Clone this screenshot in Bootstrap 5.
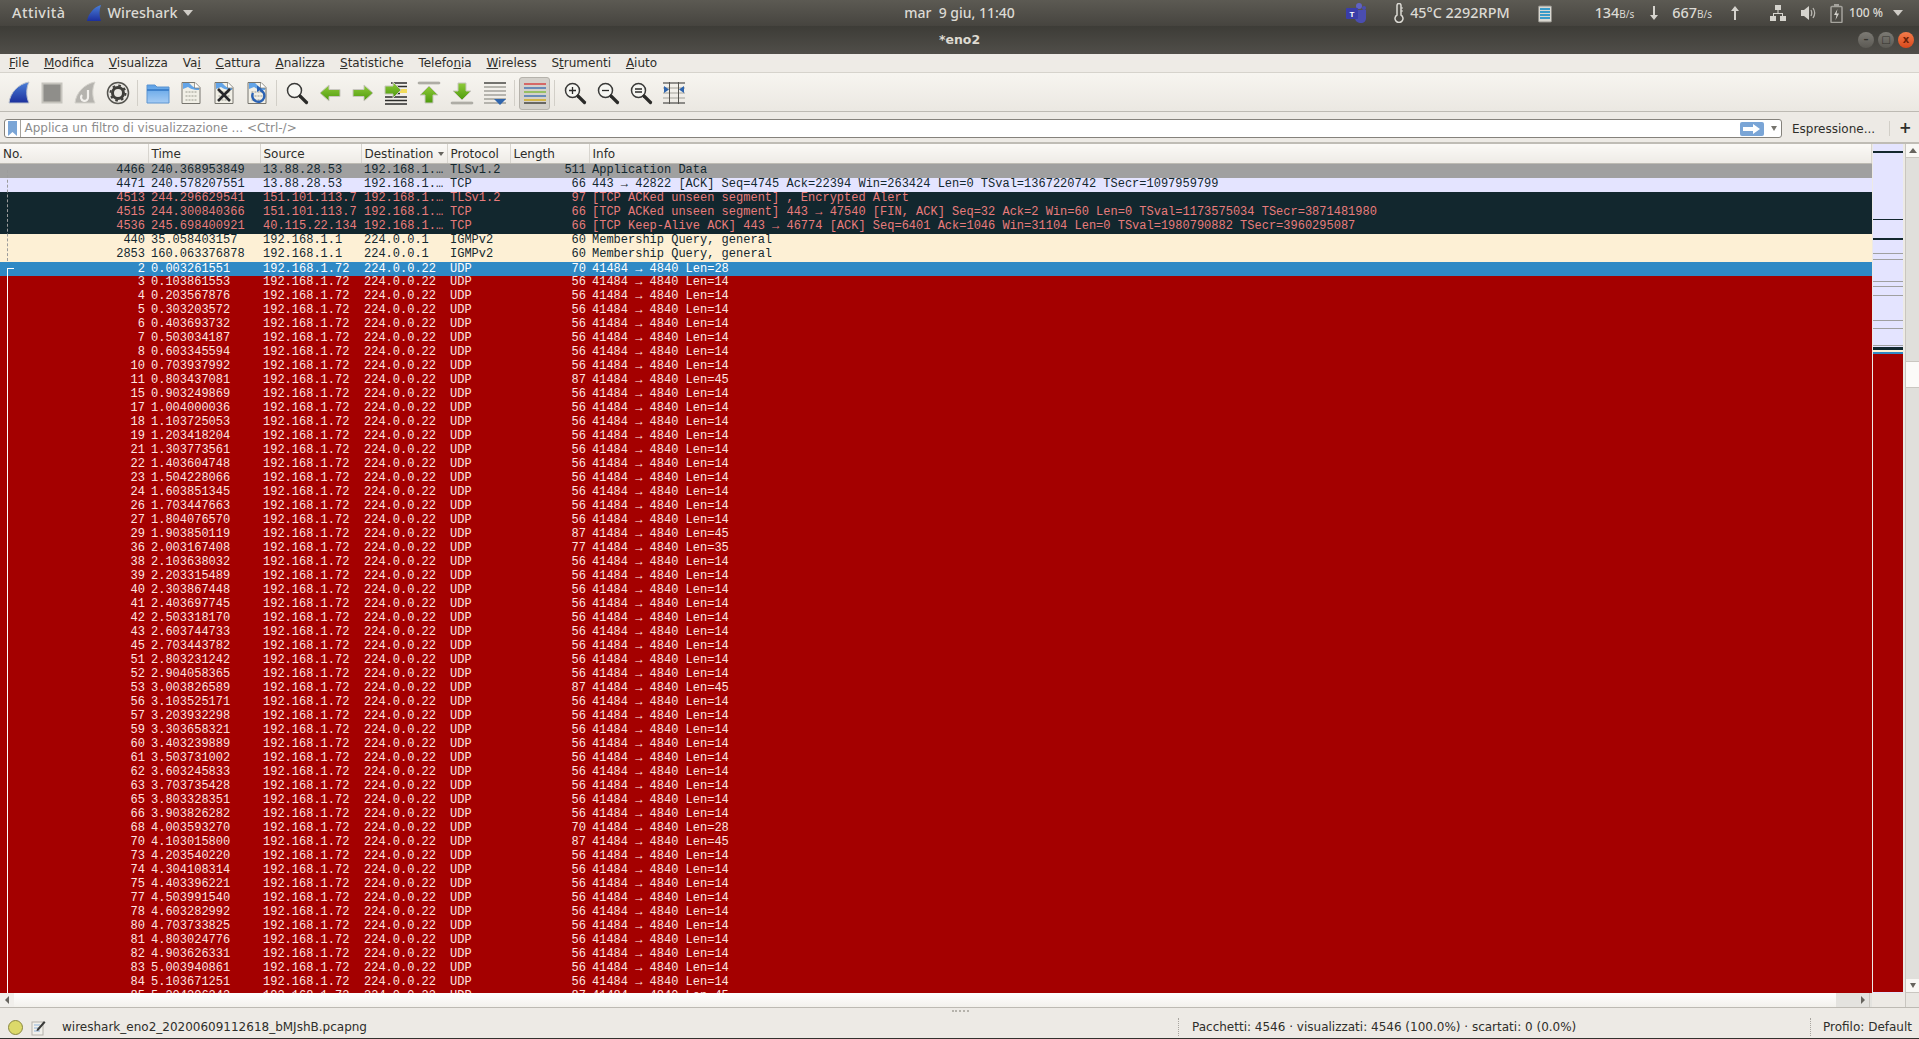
<!DOCTYPE html>
<html lang="it">
<head>
    <meta charset="UTF-8">
    <title>*eno2</title>
    <link href="https://cdn.jsdelivr.net/npm/bootstrap@5.3.0/dist/css/bootstrap.min.css" rel="stylesheet">
    <style>
        html, body { height: 100%; overflow: hidden; }
        body { font-family: "DejaVu Sans", sans-serif; font-size: 12px; color: #2e2e2a; background: #edeae5; }
        svg { display: block; flex: none; }

        /* gnome top bar */
        .top-bar { height: 26px; background: linear-gradient(#5c5a53, #46443f); color: #dcdad4; font-family: "Noto Sans", sans-serif; font-size: 14.4px; font-weight: 500; line-height: 26px; }
        .top-side { flex: 1 1 0; }
        .top-date { font-size: 14px; }
        .top-act { letter-spacing: .5px; }
        .ms-shark { margin-left: 20px; }
        .ms-6 { margin-left: 6px; }
        .ms-8 { margin-left: 8px; }
        .ms-27 { margin-left: 27px; }
        .ms-31 { margin-left: 31px; }
        .ms-42 { margin-left: 42px; }
        .ms-19 { margin-left: 19px; }
        .ms-16 { margin-left: 16px; }
        .ms-14 { margin-left: 14px; }
        .ms-15 { margin-left: 15px; }
        .ms-10 { margin-left: 10px; }
        .me-16 { margin-right: 16px; }
        .unit-small { font-size: 10px; font-weight: 400; }
        .tiny-pct { font-size: 12px; }
        .drop-tri { width: 0; height: 0; border-left: 5px solid transparent; border-right: 5px solid transparent; border-top: 6px solid #cfccc6; }

        /* window title */
        .title-bar { height: 28px; background: linear-gradient(#3d3c37, #504e49); color: #dfdbd2; font-size: 12.5px; font-weight: 700; position: relative; }
        .win-btns { position: absolute; right: 5px; top: 6px; gap: 4px; }
        .win-btn { width: 16px; height: 16px; border-radius: 50%; background: linear-gradient(#7d7b75, #5b5953); color: #35342f; font-size: 10px; line-height: 16px; text-align: center; }
        .win-close { background: linear-gradient(#f47c4b, #d9491c); color: #6d2208; }

        /* menu */
        .menu-bar { height: 19px; background: #eeebe6; border-bottom: 1px solid #d6d3cc; padding-left: 2px; line-height: 18px; }
        .menu-item { padding: 0 7px; margin-right: .8px; color: #2e2e2a; }

        /* toolbar */
        .tool-bar { height: 39px; background: linear-gradient(#f7f5f0, #ebe8e2); border-bottom: 1px solid #bdbab3; padding: 2px 0 0 2px; }
        .tool-btn { width: 33px; height: 33px; }
        .tool-on { width: 31px; margin: 0 1px; background: #d4d1cb; border: 1px solid #b5b2ab; border-radius: 3px; }
        .tool-sep { width: 7px; height: 26px; }
        .tool-sep::after { content: ""; display: block; width: 1px; height: 100%; margin-left: 3px; background: #d2cfc8; }

        /* display filter */
        .filter-bar { height: 32px; background: #edeae5; border-bottom: 2px solid #bfbcb5; padding: 3px 0 0 4px; }
        .filter-box { width: 1778px; height: 19px; background: #fff; border: 1px solid #85827c; border-radius: 3px; }
        .filter-mark { width: 17px; height: 100%; border-right: 1px solid #a5a29c; }
        .filter-input { height: 17px; padding: 0 3px; border: 0; border-radius: 0; font-size: 12px; line-height: 17px; background: transparent; }
        .filter-input::placeholder { color: #8c8c8c; opacity: 1; }
        .filter-go { margin-right: 7px; }
        .filter-tri { margin-right: 4px; width: 0; height: 0; border-left: 3.5px solid transparent; border-right: 3.5px solid transparent; border-top: 5px solid #77756f; }
        .expr-btn { margin-left: 10px; width: 97px; }
        .expr-sep { width: 1px; height: 15px; background: #d2cfc8; }
        .expr-plus { margin-left: 9px; font-size: 15px; line-height: 15px; font-weight: 700; }

        /* packet list */
        .list-pane { flex: 1 1 0; min-height: 0; position: relative; }
        .list-main { flex: 1 1 0; min-width: 0; overflow: hidden; }
        .list-scroll { flex: 1 1 0; min-height: 0; overflow: hidden; background: #a40000; }
        .pkt-table { table-layout: fixed; width: 100%; font-family: "Liberation Mono", monospace; font-size: 12px; }
        .pkt-table > thead > tr > th { height: 19px; padding: 1px 3px 0; font-family: "DejaVu Sans", sans-serif; font-size: 12px; font-weight: 400; line-height: 17px; color: #2e2e2a; background: linear-gradient(#fbf9f6, #eeebe6); border-right: 1px solid #d8d5cf; border-bottom: 1px solid #bdbab3; }
        .pkt-table > tbody > tr > td { height: 14px; padding: 0 3px 1px; line-height: 13px; white-space: nowrap; overflow: hidden; border: 0; color: var(--row-fg); background-color: var(--row-bg); }
        .pkt-table > tbody > tr.pkt-sel > td { padding: 0 3px; line-height: 14px; }
        .pkt-gray { --row-bg: #a0a0a0; --row-fg: #12272e; }
        .pkt-lav { --row-bg: #e4e4ff; --row-fg: #12272e; }
        .pkt-dark { --row-bg: #12272e; --row-fg: #e87c7c; }
        .pkt-cream { --row-bg: #fdf0d5; --row-fg: #12272e; }
        .pkt-sel { --row-bg: #2f89c5; --row-fg: #fff; }
        .pkt-red { --row-bg: #a40000; --row-fg: #ffe4e0; }
        .sort-tri { width: 0; height: 0; margin-top: 6px; border-left: 3.5px solid transparent; border-right: 3.5px solid transparent; border-top: 4px solid #66645e; }

        .rel-up { position: absolute; left: 7px; top: 26px; height: 91px; border-left: 1px dashed #9c9c9c; }
        .rel-down { position: absolute; left: 7px; top: 124px; width: 7px; bottom: 14px; border-left: 1px solid #fff; border-top: 1px solid #fff; }

        /* intelligent scrollbar and scrollbars */
        .mini-map { width: 30px; margin-left: 1px; margin-bottom: 14px; background: #e4e4ff; }
        .v-scroll { width: 14px; margin-left: 2px; background: #e0dfdb; border-left: 1px solid #c9c6c0; }
        .scroll-btn { height: 14px; background: #f8f7f4; border-bottom: 1px solid #c9c6c0; }
        .scroll-thumb { height: 27px; margin-top: 203px; background: #fbfaf8; border-top: 1px solid #c9c6c0; border-bottom: 1px solid #c9c6c0; }
        .scroll-corner { height: 14px; background: #e9e7e2; }
        .tri-up { width: 0; height: 0; border-left: 4px solid transparent; border-right: 4px solid transparent; border-bottom: 5px solid #66645e; }
        .tri-down { width: 0; height: 0; border-left: 3.5px solid transparent; border-right: 3.5px solid transparent; border-top: 5px solid #66645e; }
        .tri-left { width: 0; height: 0; border-top: 4px solid transparent; border-bottom: 4px solid transparent; border-right: 4px solid #66645e; }
        .tri-right { width: 0; height: 0; border-top: 4px solid transparent; border-bottom: 4px solid transparent; border-left: 4px solid #66645e; }
        .h-scroll { height: 14px; background: #e4e3df; flex: none; }
        .h-end { width: 14px; background: #f1efeb; }
        .h-thumb { flex: 1 1 0; background: linear-gradient(#fff, #f3f1ec); }
        .h-trough { width: 21px; }
        .h-end-right { width: 13px; background: #e4e3df; border-right: 1px solid #c9c6c0; }
        .h-rest { width: 2px; }

        /* status bar */
        .status-bar { height: 32px; background: #edeae5; border-top: 1px solid #bdbab3; border-bottom: 1px solid #33322e; padding: 8px 7px 0 8px; position: relative; }
        .led { width: 15px; height: 15px; border-radius: 50%; background: #dcd96a; border: 1px solid #8a8840; }
        .status-file { margin-left: 16px; }
        .status-count { width: 632px; padding-left: 13px; border-left: 1px dotted #a8a59f; }
        .status-prof { padding-left: 12px; border-left: 1px dotted #a8a59f; }
        .grip { position: absolute; left: 952px; top: 2px; width: 17px; height: 2px; border-top: 2px dotted #b5b2ab; }
    </style>
</head>
<body class="d-flex flex-column">

    <!-- shared icon parts -->
    <svg width="0" height="0" class="position-absolute">
        <defs>
            <linearGradient id="grn" x1="0" y1="0" x2="0" y2="1"><stop offset="0" stop-color="#8fcb3a"/><stop offset="1" stop-color="#4d9a0c"/></linearGradient>
            <linearGradient id="fin" x1="0" y1="0" x2="0" y2="1"><stop offset="0" stop-color="#4a7fd8"/><stop offset="1" stop-color="#1c2f9c"/></linearGradient>
            <linearGradient id="fold" x1="0" y1="0" x2="0" y2="1"><stop offset="0" stop-color="#5aa0e6"/><stop offset="1" stop-color="#a6ccf4"/></linearGradient>
            <symbol id="page" viewBox="0 0 24 24">
                <path d="M3 1.500h13l5 5v16H3z" fill="#f1efe6" stroke="#77756e"/>
                <path d="M4 2h6c3 2 3 5 10 5v2c-7 0-9-2-11-3l-5 2z" fill="#62a4e8"/>
                <path d="M15.500 1.500v5.500h5.500" fill="#fff" stroke="#77756e" stroke-width=".7"/>
                <g stroke="#9a9a8e" stroke-width="1.200" stroke-dasharray="2 1"><path d="M6.500 11h11M6.500 15h11M6.500 19h11"/></g>
            </symbol>
            <symbol id="lens" viewBox="0 0 24 24">
                <circle cx="9.500" cy="9.500" r="7" fill="#f6f6f2" stroke="#3a3a38" stroke-width="1.500"/>
                <path d="M15 15l6.500 6.500" stroke="#2b2b29" stroke-width="3.200" stroke-linecap="round"/>
            </symbol>
        </defs>
    </svg>

    <!-- top bar -->
    <div class="top-bar d-flex align-items-center flex-none">
        <div class="top-side d-flex align-items-center">
            <span class="ms-2 ps-1 top-act">Attività</span>
            <svg class="ms-shark" width="16" height="17" viewBox="0 0 16 17"><path d="M1 16C2 9 8 2 15 0c-2 5-2 11 0 16z" fill="url(#fin)"/></svg>
            <span class="ms-6">Wireshark</span>
            <span class="drop-tri ms-6"></span>
        </div>
        <div class="top-date">mar&nbsp;&nbsp;9 giu, 11:40</div>
        <div class="top-side d-flex align-items-center justify-content-end">
            <svg width="22" height="22" viewBox="0 0 22 22"><circle cx="14" cy="4" r="3" fill="#5f62c4"/><circle cx="19" cy="6" r="2" fill="#4a4db0"/><path d="M10 8h11v8c0 3-2 5-5 5s-6-2-6-5z" fill="#4a4db0"/><rect x="1" y="6" width="12" height="11" rx="1" fill="#3a3da8"/><text x="7" y="15" text-anchor="middle" font-size="8" font-family="Liberation Sans" font-weight="700" fill="#fff">T</text></svg>
            <svg class="ms-27" width="10" height="20" viewBox="0 0 10 20"><path d="M3 2.500a2 2 0 0 1 4 0v9.500a4 4 0 1 1-4 0z" fill="none" stroke="#dcdad4" stroke-width="1.500"/><path d="M7 5h2M7 8h2" stroke="#dcdad4"/></svg>
            <span class="ms-6">45°C 2292RPM</span>
            <svg class="ms-27" width="16" height="19" viewBox="0 0 16 19"><rect x="1.500" y="2" width="13" height="16" rx="1" fill="#d9d7d0" stroke="#8f8d87"/><path d="M3 5h10M3 8h10M3 11h10M3 14h10" stroke="#3a9bc9" stroke-width="1.800"/></svg>
            <span class="ms-42">134<span class="unit-small">B/s</span></span>
            <svg class="ms-16" width="8" height="14" viewBox="0 0 8 14"><path d="M3 0h2v9h3l-4 5-4-5h3z" fill="#d5d3cd"/></svg>
            <span class="ms-14">667<span class="unit-small">B/s</span></span>
            <svg class="ms-19" width="8" height="14" viewBox="0 0 8 14"><path d="M3 14h2V5h3L4 0 0 5h3z" fill="#d5d3cd"/></svg>
            <svg class="ms-31" width="16" height="16" viewBox="0 0 16 16" fill="#d5d3cd"><rect x="5" y="0" width="6" height="5"/><rect x="0" y="11" width="6" height="5"/><rect x="10" y="11" width="6" height="5"/><path d="M7.500 5h1v3H13v3h-1V9H4v2H3V8h4.500z"/></svg>
            <svg class="ms-15" width="15" height="16" viewBox="0 0 15 16" fill="none" stroke="#b8b6b0"><path d="M0 5h3l5-4v14l-5-4H0z" fill="#d5d3cd" stroke="none"/><path d="M10 5c1 2 1 4 0 6M12 3c2 3 2 7 0 10" stroke-width="1.300"/></svg>
            <svg class="ms-14" width="13" height="19" viewBox="0 0 13 19"><rect x="1" y="2.500" width="11" height="16" rx="1" fill="none" stroke="#a5a39d" stroke-width="1.500"/><rect x="4" y="0" width="5" height="2" fill="#a5a39d"/><path d="M7.500 5L4 11h2.500L5.500 16 9 9.500H6.500z" fill="#d5d3cd"/></svg>
            <span class="ms-6 tiny-pct">100 %</span>
            <span class="drop-tri ms-10 me-16"></span>
        </div>
    </div>

    <!-- window title -->
    <div class="title-bar d-flex align-items-center justify-content-center flex-none">
        <span>*eno2</span>
        <div class="win-btns d-flex">
            <div class="win-btn">–</div>
            <div class="win-btn">□</div>
            <div class="win-btn win-close">x</div>
        </div>
    </div>

    <!-- menu -->
    <nav class="menu-bar d-flex flex-none">
        <span class="menu-item"><u>F</u>ile</span>
        <span class="menu-item"><u>M</u>odifica</span>
        <span class="menu-item"><u>V</u>isualizza</span>
        <span class="menu-item">Va<u>i</u></span>
        <span class="menu-item"><u>C</u>attura</span>
        <span class="menu-item"><u>A</u>nalizza</span>
        <span class="menu-item"><u>S</u>tatistiche</span>
        <span class="menu-item">Telefo<u>n</u>ia</span>
        <span class="menu-item"><u>W</u>ireless</span>
        <span class="menu-item">S<u>t</u>rumenti</span>
        <span class="menu-item"><u>A</u>iuto</span>
    </nav>

    <!-- toolbar -->
    <div class="tool-bar d-flex align-items-center flex-none">
        <div class="tool-btn d-flex align-items-center justify-content-center"><svg width="24" height="24" viewBox="0 0 24 24"><path d="M2 22C3 12 11 3 22 1c-3 6-3 15 0 21z" fill="url(#fin)" stroke="#b9c0cc"/></svg></div>
        <div class="tool-btn d-flex align-items-center justify-content-center"><svg width="24" height="24" viewBox="0 0 24 24"><rect x="2.500" y="2.500" width="19" height="19" fill="#8f8e8a" stroke="#c6c4bd" stroke-width="2"/></svg></div>
        <div class="tool-btn d-flex align-items-center justify-content-center"><svg width="24" height="24" viewBox="0 0 24 24"><path d="M2 22C3 12 11 3 22 1c-3 6-3 15 0 21z" fill="#b5b3ae" stroke="#d4d2cc"/><path d="M15 9v7a3.500 3.500 0 1 1-6-2" fill="none" stroke="#f2f0ec" stroke-width="2.200"/></svg></div>
        <div class="tool-btn d-flex align-items-center justify-content-center"><svg width="24" height="24" viewBox="0 0 24 24"><circle cx="12" cy="12" r="10.500" fill="#e9e7e2" stroke="#55544f" stroke-width="1.500"/><circle cx="12" cy="12" r="5.500" fill="none" stroke="#3f3e3a" stroke-width="3"/><circle cx="12" cy="12" r="7.500" fill="none" stroke="#3f3e3a" stroke-width="2" stroke-dasharray="2.600 3.300"/></svg></div>
        <div class="tool-sep"></div>
        <div class="tool-btn d-flex align-items-center justify-content-center"><svg width="24" height="22" viewBox="0 0 24 22"><path d="M1 3h8l2 2h12v16H1z" fill="url(#fold)" stroke="#5c94d0"/><rect x="1" y="7" width="22" height="2" fill="#3f82cc"/></svg></div>
        <div class="tool-btn d-flex align-items-center justify-content-center"><svg width="24" height="24"><use href="#page"/></svg></div>
        <div class="tool-btn d-flex align-items-center justify-content-center"><svg width="24" height="24" viewBox="0 0 24 24"><use href="#page" width="24" height="24"/><path d="M6 8l12 12M18 8L6 20" stroke="#26262a" stroke-width="2.600"/></svg></div>
        <div class="tool-btn d-flex align-items-center justify-content-center"><svg width="24" height="24" viewBox="0 0 24 24"><use href="#page" width="24" height="24"/><path d="M15 9a6 6 0 1 1-7 3" fill="none" stroke="#2a62b4" stroke-width="2.400"/><path d="M12 4.500l5 3.500-5 3z" fill="#2a62b4"/></svg></div>
        <div class="tool-sep"></div>
        <div class="tool-btn d-flex align-items-center justify-content-center"><svg width="24" height="24"><use href="#lens"/></svg></div>
        <div class="tool-btn d-flex align-items-center justify-content-center"><svg width="24" height="24" viewBox="0 0 24 24"><path d="M2 12l9-8v4.500h11v7H11V20z" fill="url(#grn)" stroke="#c8c6bf"/></svg></div>
        <div class="tool-btn d-flex align-items-center justify-content-center"><svg width="24" height="24" viewBox="0 0 24 24"><path d="M22 12l-9-8v4.500H2v7h11V20z" fill="url(#grn)" stroke="#c8c6bf"/></svg></div>
        <div class="tool-btn d-flex align-items-center justify-content-center"><svg width="24" height="24" viewBox="0 0 24 24"><path d="M7 2h16M12 5.500h11M12 9h4M12 12.500h4M1 16h22M1 19.500h22M1 23h22" stroke="#2d2d2b" stroke-width="1.300"/><rect x="16" y="8" width="7" height="4" fill="#f2dc5c"/><path d="M17 9l-8-8v4H1v8h8v4z" fill="url(#grn)" stroke="#c8c6bf"/></svg></div>
        <div class="tool-btn d-flex align-items-center justify-content-center"><svg width="24" height="24" viewBox="0 0 24 24"><rect x="1" y="1" width="22" height="2" rx="1" fill="#b9b7b0" stroke="#8f8d87" stroke-width=".5"/><path d="M12 5l9 9h-5v8H8v-8H3z" fill="url(#grn)" stroke="#c8c6bf"/></svg></div>
        <div class="tool-btn d-flex align-items-center justify-content-center"><svg width="24" height="24" viewBox="0 0 24 24"><rect x="1" y="21" width="22" height="2" rx="1" fill="#b9b7b0" stroke="#8f8d87" stroke-width=".5"/><path d="M12 19l-9-9h5V2h8v8h5z" fill="url(#grn)" stroke="#c8c6bf"/></svg></div>
        <div class="tool-btn d-flex align-items-center justify-content-center"><svg width="24" height="24" viewBox="0 0 24 24"><path d="M1 2h22" stroke="#2d2d2b" stroke-width="1.300"/><path d="M1 6h22M1 10h22M1 14h22M1 18h22M1 22h22" stroke="#a3a19a" stroke-width="1.300"/><path d="M11 18h12l-6 6z" fill="#2f65ad"/></svg></div>
        <div class="tool-sep"></div>
        <div class="tool-btn tool-on d-flex align-items-center justify-content-center"><svg width="24" height="22" viewBox="0 0 24 22" stroke-width="1.300"><path d="M1 2h22" stroke="#d62f2f"/><path d="M1 6h22" stroke="#2f65ad"/><path d="M1 10h22" stroke="#74b52c"/><path d="M1 14h22" stroke="#2f65ad"/><path d="M1 18h22" stroke="#d1a400"/><path d="M1 21h22" stroke="#2d2d2b"/></svg></div>
        <div class="tool-sep"></div>
        <div class="tool-btn d-flex align-items-center justify-content-center"><svg width="24" height="24" viewBox="0 0 24 24"><use href="#lens" width="24" height="24"/><path d="M6 9.500h7M9.500 6v7" stroke="#2b2b29" stroke-width="1.300"/></svg></div>
        <div class="tool-btn d-flex align-items-center justify-content-center"><svg width="24" height="24" viewBox="0 0 24 24"><use href="#lens" width="24" height="24"/><path d="M6 9.500h7" stroke="#2b2b29" stroke-width="1.300"/></svg></div>
        <div class="tool-btn d-flex align-items-center justify-content-center"><svg width="24" height="24" viewBox="0 0 24 24"><use href="#lens" width="24" height="24"/><path d="M6 8h7M6 11h7" stroke="#2b2b29" stroke-width="1.300"/></svg></div>
        <div class="tool-btn d-flex align-items-center justify-content-center"><svg width="24" height="24" viewBox="0 0 24 24"><path d="M1 2h22M1 22h22" stroke="#2d2d2b" stroke-width="1.200"/><path d="M1 7h22M1 12h22M1 17h22" stroke="#a3a19a" stroke-width="1.200"/><path d="M7.500 1v22M16.500 1v22" stroke="#55544f"/><path d="M2 5l5 3.500L2 12zM22 5l-5 3.500 5 3.500z" fill="#2f65ad"/></svg></div>
    </div>

    <!-- display filter -->
    <div class="filter-bar d-flex align-items-center flex-none">
        <div class="filter-box d-flex align-items-center">
            <div class="filter-mark d-flex align-items-center justify-content-center"><svg width="9" height="15" viewBox="0 0 9 15"><path d="M0 0h9v15L4.500 11 0 15z" fill="#7aa5d6"/></svg></div>
            <input class="form-control filter-input flex-grow-1" type="text" placeholder="Applica un filtro di visualizzazione ... &lt;Ctrl-/&gt;">
            <svg class="filter-go" width="24" height="14" viewBox="0 0 24 14"><rect width="24" height="14" rx="2" fill="#7aa5d6"/><path d="M3 5h10V2l7 5-7 5V9H3z" fill="#fff"/></svg>
            <span class="filter-tri"></span>
        </div>
        <div class="expr-btn">Espressione...</div>
        <div class="expr-sep"></div>
        <div class="expr-plus">+</div>
    </div>

    <!-- packet list -->
    <div class="list-pane d-flex">
        <div class="list-main d-flex flex-column">
            <div class="list-scroll">
                <table class="table table-borderless mb-0 pkt-table">
                    <colgroup>
                        <col style="width:148px"><col style="width:112px"><col style="width:101px"><col style="width:86px"><col style="width:63px"><col style="width:79px"><col>
                    </colgroup>
                    <thead>
                        <tr>
                            <th>No.</th><th>Time</th><th>Source</th>
                            <th><div class="d-flex justify-content-between">Destination<span class="sort-tri"></span></div></th>
                            <th>Protocol</th><th>Length</th><th>Info</th>
                        </tr>
                    </thead>
                    <tbody id="pktRows"></tbody>
                </table>
            </div>
            <div class="h-scroll d-flex">
                <div class="h-end d-flex align-items-center justify-content-center"><span class="tri-left"></span></div>
                <div class="h-thumb"></div>
                <div class="h-trough"></div>
                <div class="h-end-right d-flex align-items-center justify-content-center"><span class="tri-right"></span></div>
                <div class="h-rest"></div>
            </div>
        </div>
        <div class="rel-up"></div>
        <div class="rel-down"></div>
        <div class="mini-map">
            <svg width="30" height="848" viewBox="0 0 30 848">
                <rect y="7" width="30" height="2" fill="#12272e"/>
                <rect y="75" width="30" height="1" fill="#12272e"/>
                <rect y="94" width="30" height="2" fill="#12272e"/>
                <g fill="#a0a0a0">
                    <rect y="109" width="30" height="1"/><rect y="115" width="30" height="1"/><rect y="137" width="30" height="1"/>
                    <rect y="142" width="30" height="1"/><rect y="151" width="30" height="1"/><rect y="176" width="30" height="1"/>
                    <rect y="184" width="30" height="1"/><rect y="201" width="30" height="1"/>
                </g>
                <rect y="203" width="30" height="3" fill="#12272e"/>
                <rect y="206" width="30" height="2" fill="#fdf0d5"/>
                <rect y="208" width="30" height="2" fill="#2f89c5"/>
                <rect y="210" width="30" height="638" fill="#a40000"/>
            </svg>
        </div>
        <div class="v-scroll d-flex flex-column">
            <div class="scroll-btn d-flex align-items-center justify-content-center"><span class="tri-up"></span></div>
            <div class="scroll-thumb"></div>
            <div class="flex-grow-1"></div>
            <div class="scroll-btn d-flex align-items-center justify-content-center"><span class="tri-down"></span></div>
            <div class="scroll-corner"></div>
        </div>
    </div>

    <!-- status bar -->
    <div class="status-bar d-flex align-items-center flex-none">
        <div class="grip"></div>
        <span class="led"></span>
        <svg class="ms-2" width="15" height="17" viewBox="0 0 15 17"><rect x="1" y="3" width="11" height="13" fill="#f2f0ea" stroke="#b5b2ab"/><path d="M3 6h6M3 9h6M3 12h6" stroke="#8fb4dc"/><path d="M6 10L13 2l1.500 1.500-7 8-2 .5z" fill="#3a3a38"/></svg>
        <span class="status-file flex-grow-1">wireshark_eno2_20200609112618_bMJshB.pcapng</span>
        <span class="status-count">Pacchetti: 4546 · visualizzati: 4546 (100.0%) · scartati: 0 (0.0%)</span>
        <span class="status-prof">Profilo: Default</span>
    </div>

    <script src="https://cdn.jsdelivr.net/npm/bootstrap@5.3.0/dist/js/bootstrap.bundle.min.js"></script>
    <script>
        const pc = '192.168.1.…';
        const top_rows = [
            ['pkt-gray', 4466, '240.368953849', '13.88.28.53', pc, 'TLSv1.2', 511, 'Application Data'],
            ['pkt-lav', 4471, '240.578207551', '13.88.28.53', pc, 'TCP', 66, '443 → 42822 [ACK] Seq=4745 Ack=22394 Win=263424 Len=0 TSval=1367220742 TSecr=1097959799'],
            ['pkt-dark', 4513, '244.296629541', '151.101.113.7', pc, 'TLSv1.2', 97, '[TCP ACKed unseen segment] , Encrypted Alert'],
            ['pkt-dark', 4515, '244.300840366', '151.101.113.7', pc, 'TCP', 66, '[TCP ACKed unseen segment] 443 → 47540 [FIN, ACK] Seq=32 Ack=2 Win=60 Len=0 TSval=1173575034 TSecr=3871481980'],
            ['pkt-dark', 4536, '245.698400921', '40.115.22.134', pc, 'TCP', 66, '[TCP Keep-Alive ACK] 443 → 46774 [ACK] Seq=6401 Ack=1046 Win=31104 Len=0 TSval=1980790882 TSecr=3960295087'],
            ['pkt-cream', 440, '35.058403157', '192.168.1.1', '224.0.0.1', 'IGMPv2', 60, 'Membership Query, general'],
            ['pkt-cream', 2853, '160.063376878', '192.168.1.1', '224.0.0.1', 'IGMPv2', 60, 'Membership Query, general']
        ];
        // no, time, and the udp payload when it is not 14
        const udp = [
            [2,'0.003261551',28],[3,'0.103861553'],[4,'0.203567876'],[5,'0.303203572'],[6,'0.403693732'],[7,'0.503034187'],[8,'0.603345594'],
            [10,'0.703937992'],[11,'0.803437081',45],[15,'0.903249869'],[17,'1.004000036'],[18,'1.103725053'],[19,'1.203418204'],[21,'1.303773561'],
            [22,'1.403604748'],[23,'1.504228066'],[24,'1.603851345'],[26,'1.703447663'],[27,'1.804076570'],[29,'1.903850119',45],[36,'2.003167408',35],
            [38,'2.103638032'],[39,'2.203315489'],[40,'2.303867448'],[41,'2.403697745'],[42,'2.503318170'],[43,'2.603744733'],[45,'2.703443782'],
            [51,'2.803231242'],[52,'2.904058365'],[53,'3.003826589',45],[56,'3.103525171'],[57,'3.203932298'],[59,'3.303658321'],[60,'3.403239889'],
            [61,'3.503731002'],[62,'3.603245833'],[63,'3.703735428'],[65,'3.803328351'],[66,'3.903826282'],[68,'4.003593270',28],[70,'4.103015800',45],
            [73,'4.203540220'],[74,'4.304108314'],[75,'4.403396221'],[77,'4.503991540'],[78,'4.603282992'],[80,'4.703733825'],[81,'4.803024776'],
            [82,'4.903626331'],[83,'5.003940861'],[84,'5.103671251'],[85,'5.204206243',45]
        ];
        const rows = top_rows.concat(udp.map((u, i) => {
            const pay = u[2] || 14;
            return [i === 0 ? 'pkt-sel' : 'pkt-red', u[0], u[1], '192.168.1.72', '224.0.0.22', 'UDP', pay + 42, '41484 → 4840 Len=' + pay];
        }));
        document.getElementById('pktRows').innerHTML = rows.map(r =>
            `<tr class="${r[0]}"><td class="text-end">${r[1]}</td><td>${r[2]}</td><td>${r[3]}</td><td>${r[4]}</td><td>${r[5]}</td><td class="text-end">${r[6]}</td><td>${r[7]}</td></tr>`
        ).join('');
    </script>
</body>
</html>
